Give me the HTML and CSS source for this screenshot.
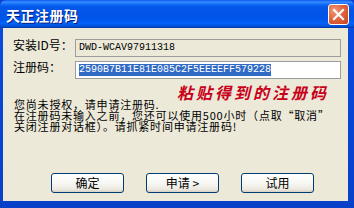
FILE: index.html
```html
<!DOCTYPE html>
<html lang="zh-CN">
<head>
<meta charset="utf-8">
<title>天正注册码</title>
<link rel="stylesheet" href="styles.css">
</head>
<body>
<div class="window">
  <div class="titlebar">
    <span class="title">天正注册码</span>
    <span class="close">
      <svg width="13" height="13" viewBox="0 0 13 13"><path d="M2 2 L11 11 M11 2 L2 11" stroke="#fff" stroke-width="2.2" stroke-linecap="square" fill="none"/></svg>
    </span>
  </div>
  <div class="frame">
    <div class="content">
      <div class="row">
        <span class="label">安装ID号：</span>
        <div class="field readonly">DWD-WCAV97911318</div>
      </div>
      <div class="row">
        <span class="label">注册码：</span>
        <div class="field"><span class="sel">2590B7B11E81E085C2F5EEEEFF579228</span></div>
      </div>
      <div class="note">粘贴得到的注册码</div>
      <p class="msg">您尚未授权，请申请注册码.<br>在注册码未输入之前，您还可以使用500小时（点取“取消”<br>关闭注册对话框）。请抓紧时间申请注册码!</p>
      <div class="buttons">
        <button class="btn">确定</button>
        <button class="btn">申请 &gt;</button>
        <button class="btn">试用</button>
      </div>
    </div>
  </div>
</div>
</body>
</html>
```
FILE: styles.css
```css
html, body {
  margin: 0;
  padding: 0;
  width: 354px;
  height: 208px;
  overflow: hidden;
}
.window {
  width: 354px;
  height: 208px;
  display: flex;
  flex-direction: column;
  background: #0a3fd0;
  font-family: "Liberation Sans", "Noto Sans CJK SC", sans-serif;
  font-size: 12px;
  color: #000;
}
.titlebar {
  height: 28px;
  flex: none;
  display: flex;
  align-items: center;
  justify-content: space-between;
  padding: 0 5px 0 6px;
  box-sizing: border-box;
  background: linear-gradient(to bottom, #0a5cf2 0%, #3b8cff 8%, #1670fb 14%, #0458e8 24%, #0053e6 55%, #0058ef 72%, #0562f8 84%, #0050d6 94%, #0036a0 100%);
  border-radius: 6px 6px 0 0;
}
.title {
  color: #fff;
  font-family: "Noto Sans CJK SC", sans-serif;
  font-weight: bold;
  font-size: 14px;
  letter-spacing: 0.5px;
  text-shadow: 1px 1px 0 #0a1e7c;
  margin-top: 1px;
}
.close {
  width: 19px;
  height: 19px;
  border: 1px solid #fff;
  border-radius: 3px;
  background: radial-gradient(circle at 30% 30%, #f09a7c 0%, #e2663f 45%, #c9411e 100%);
  display: flex;
  align-items: center;
  justify-content: center;
  margin-top: 1px;
}
.close svg { display: block; }
.frame {
  flex: 1;
  display: flex;
  padding: 0 6px 7px 3px;
  background: linear-gradient(to bottom, #0a4ae0 0%, #0840c8 100%);
}
.content {
  flex: 1;
  background: #ece9d8;
  display: flex;
  flex-direction: column;
  padding: 11px 0 0 10px;
  position: relative;
}
.row {
  display: flex;
  align-items: flex-start;
  height: 18px;
  margin-bottom: 4px;
}
.label {
  width: 62px;
  font-family: "Noto Sans CJK SC", sans-serif;
  font-size: 12px;
  line-height: 12px;
}
.field {
  width: 266px;
  height: 18px;
  box-sizing: border-box;
  border: 1px solid #9c9c9c;
  background: #fff;
  font-family: "Liberation Mono", monospace;
  font-size: 10px;
  line-height: 16px;
  padding-left: 3px;
  white-space: nowrap;
}
.field.readonly {
  background: #ece9d8;
}
.sel {
  background: #316ac5;
  color: #fff;
  display: inline-block;
  line-height: 12px;
}
.note {
  position: absolute;
  left: 174px;
  top: 55px;
  color: #c8001a;
  font-family: "Noto Sans CJK SC", sans-serif;
  font-size: 16px;
  font-weight: bold;
  font-style: italic;
  letter-spacing: 3px;
  line-height: 18px;
}
.msg {
  margin: 16px 0 0 1px;
  font-family: "Noto Sans CJK SC", sans-serif;
  font-size: 11px;
  letter-spacing: 0.8px;
  line-height: 11px;
  white-space: nowrap;
}
.buttons {
  margin-top: auto;
  display: flex;
  gap: 22px;
  padding: 0 0 8px 38px;
}
.btn {
  width: 73px;
  height: 20px;
  box-sizing: border-box;
  border: 1px solid #003c74;
  border-radius: 3px;
  background: linear-gradient(to bottom, #ffffff 0%, #f7f7f4 50%, #ece9df 85%, #d6d0c5 100%);
  font-family: "Noto Sans CJK SC", sans-serif;
  font-size: 12px;
  line-height: 16px;
  padding: 0;
  color: #000;
}
```
